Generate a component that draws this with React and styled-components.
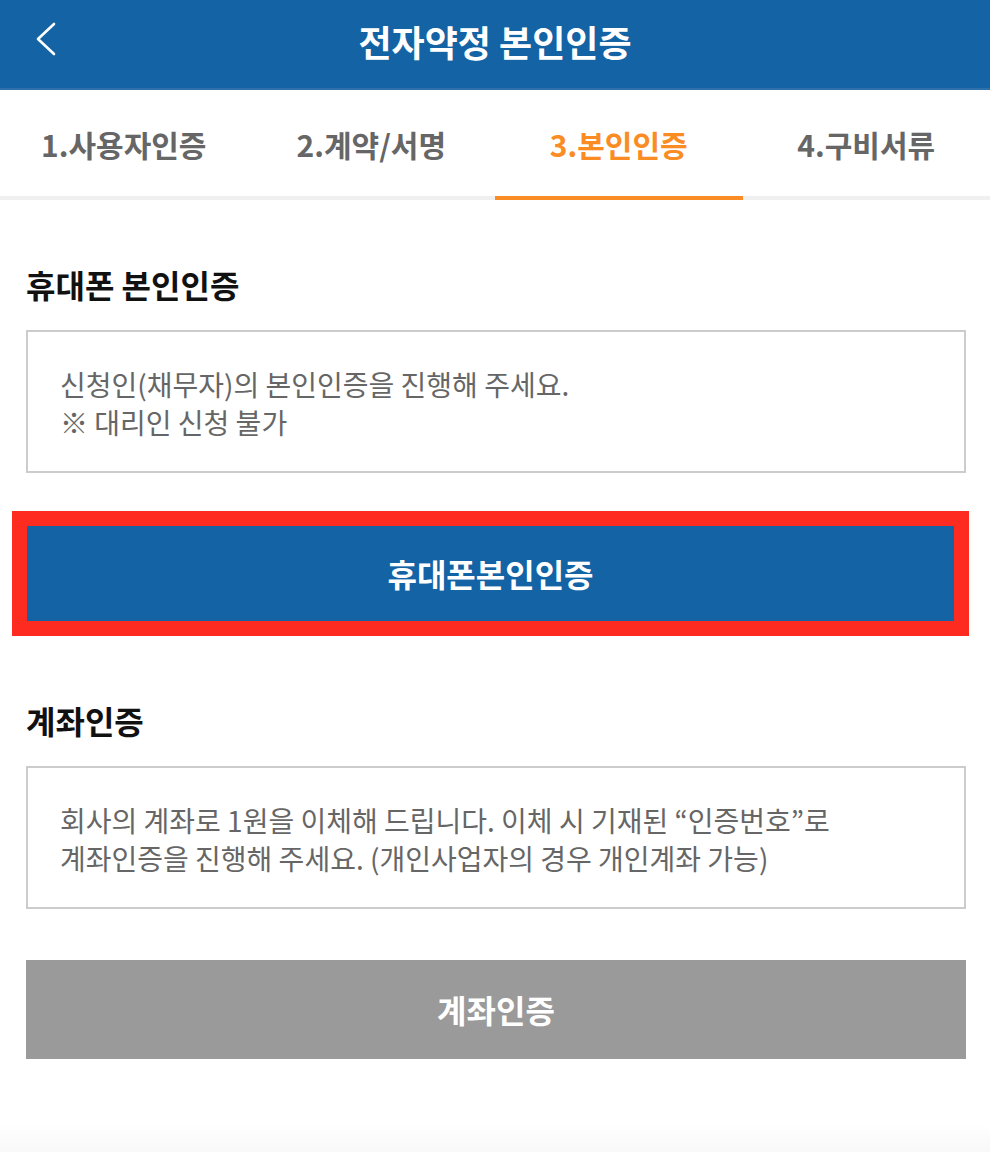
import React from 'react'
import styled, { createGlobalStyle } from 'styled-components'

const GlobalStyle = createGlobalStyle`
  * { box-sizing: border-box; }
  body {
    margin: 0;
    background: #fff;
    font-family: "Noto Sans CJK KR", "Noto Sans", sans-serif;
  }
`

const Page = styled.div`
  display: flex;
  flex-direction: column;
  min-height: 100vh;
  width: 990px;
`

const Header = styled.header`
  position: relative;
  height: 90px;
  background: #1363a5;
  border-bottom: 2px solid #3070aa;
  display: flex;
  align-items: center;
  justify-content: center;
`

const BackButton = styled.button`
  position: absolute;
  left: 30px;
  top: 18px;
  width: 32px;
  height: 42px;
  padding: 0;
  border: 0;
  background: none;
  display: flex;
  align-items: center;
  justify-content: center;
`

const HeaderTitle = styled.h1`
  margin: 0;
  color: #fff;
  font-size: 36px;
  font-weight: 700;
  line-height: 1;
  padding-bottom: 6px;
`

const Tabs = styled.nav`
  display: grid;
  grid-template-columns: repeat(4, 1fr);
  height: 110px;
  border-bottom: 4px solid #f0f0f0;
`

const Tab = styled.div`
  display: flex;
  align-items: center;
  justify-content: center;
  font-size: 30px;
  font-weight: 700;
  color: ${p => (p.$active ? '#fb8c23' : '#666')};
  margin-bottom: -4px;
  padding-top: 2px;
  border-bottom: 4px solid ${p => (p.$active ? '#fb8c23' : 'transparent')};
`

const Content = styled.main`
  padding: 0 24px 0 26px;
`

const SectionTitle = styled.h2`
  margin: ${p => p.$top}px 0 26px;
  font-size: 32px;
  font-weight: 700;
  line-height: 40px;
  color: #111;
`

const InfoBox = styled.div`
  border: 2px solid #cccccc;
  padding: 33px 32px 29px;
  font-size: 28px;
  line-height: 38px;
  color: #666;
  height: 143px;
`

const Highlight = styled.div`
  margin: 38px 0 0 -14px;
  width: 957px;
  border: 15px solid #fe2b20;
`

const Button = styled.button`
  display: flex;
  align-items: center;
  justify-content: center;
  width: 100%;
  height: ${p => p.$height}px;
  border: 0;
  margin: 0;
  padding: 0 0 2px;
  background: ${p => p.$bg};
  color: #fff;
  font-family: inherit;
  font-size: 32px;
  font-weight: 700;
`

const GrayButton = styled(Button)`
  margin-top: 51px;
`

const Bottom = styled.div`
  flex: 1;
  background: linear-gradient(to bottom, #fff 70%, #f8f8f8);
`

function ChevronLeft() {
  return (
    <svg width="24" height="36" viewBox="0 0 24 36">
      <polyline points="20,3 4,18 20,33" fill="none" stroke="#fff" strokeWidth="2.6" strokeLinecap="round" strokeLinejoin="round" />
    </svg>
  )
}

const steps = ['1.사용자인증', '2.계약/서명', '3.본인인증', '4.구비서류']

export default function App() {
  return (
    <Page>
      <GlobalStyle />
      <Header>
        <BackButton aria-label="뒤로">
          <ChevronLeft />
        </BackButton>
        <HeaderTitle>전자약정 본인인증</HeaderTitle>
      </Header>
      <Tabs>
        {steps.map((s, i) => (
          <Tab key={s} $active={i === 2}>{s}</Tab>
        ))}
      </Tabs>
      <Content>
        <SectionTitle $top={64}>휴대폰 본인인증</SectionTitle>
        <InfoBox>
          신청인(채무자)의 본인인증을 진행해 주세요.<br />
          ※ 대리인 신청 불가
        </InfoBox>
        <Highlight>
          <Button $bg="#1363a5" $height={95}>휴대폰본인인증</Button>
        </Highlight>
        <SectionTitle $top={64}>계좌인증</SectionTitle>
        <InfoBox>
          회사의 계좌로 1원을 이체해 드립니다. 이체 시 기재된 “인증번호”로<br />
          계좌인증을 진행해 주세요. (개인사업자의 경우 개인계좌 가능)
        </InfoBox>
        <GrayButton $bg="#9a9a9a" $height={99}>계좌인증</GrayButton>
      </Content>
      <Bottom />
    </Page>
  )
}
